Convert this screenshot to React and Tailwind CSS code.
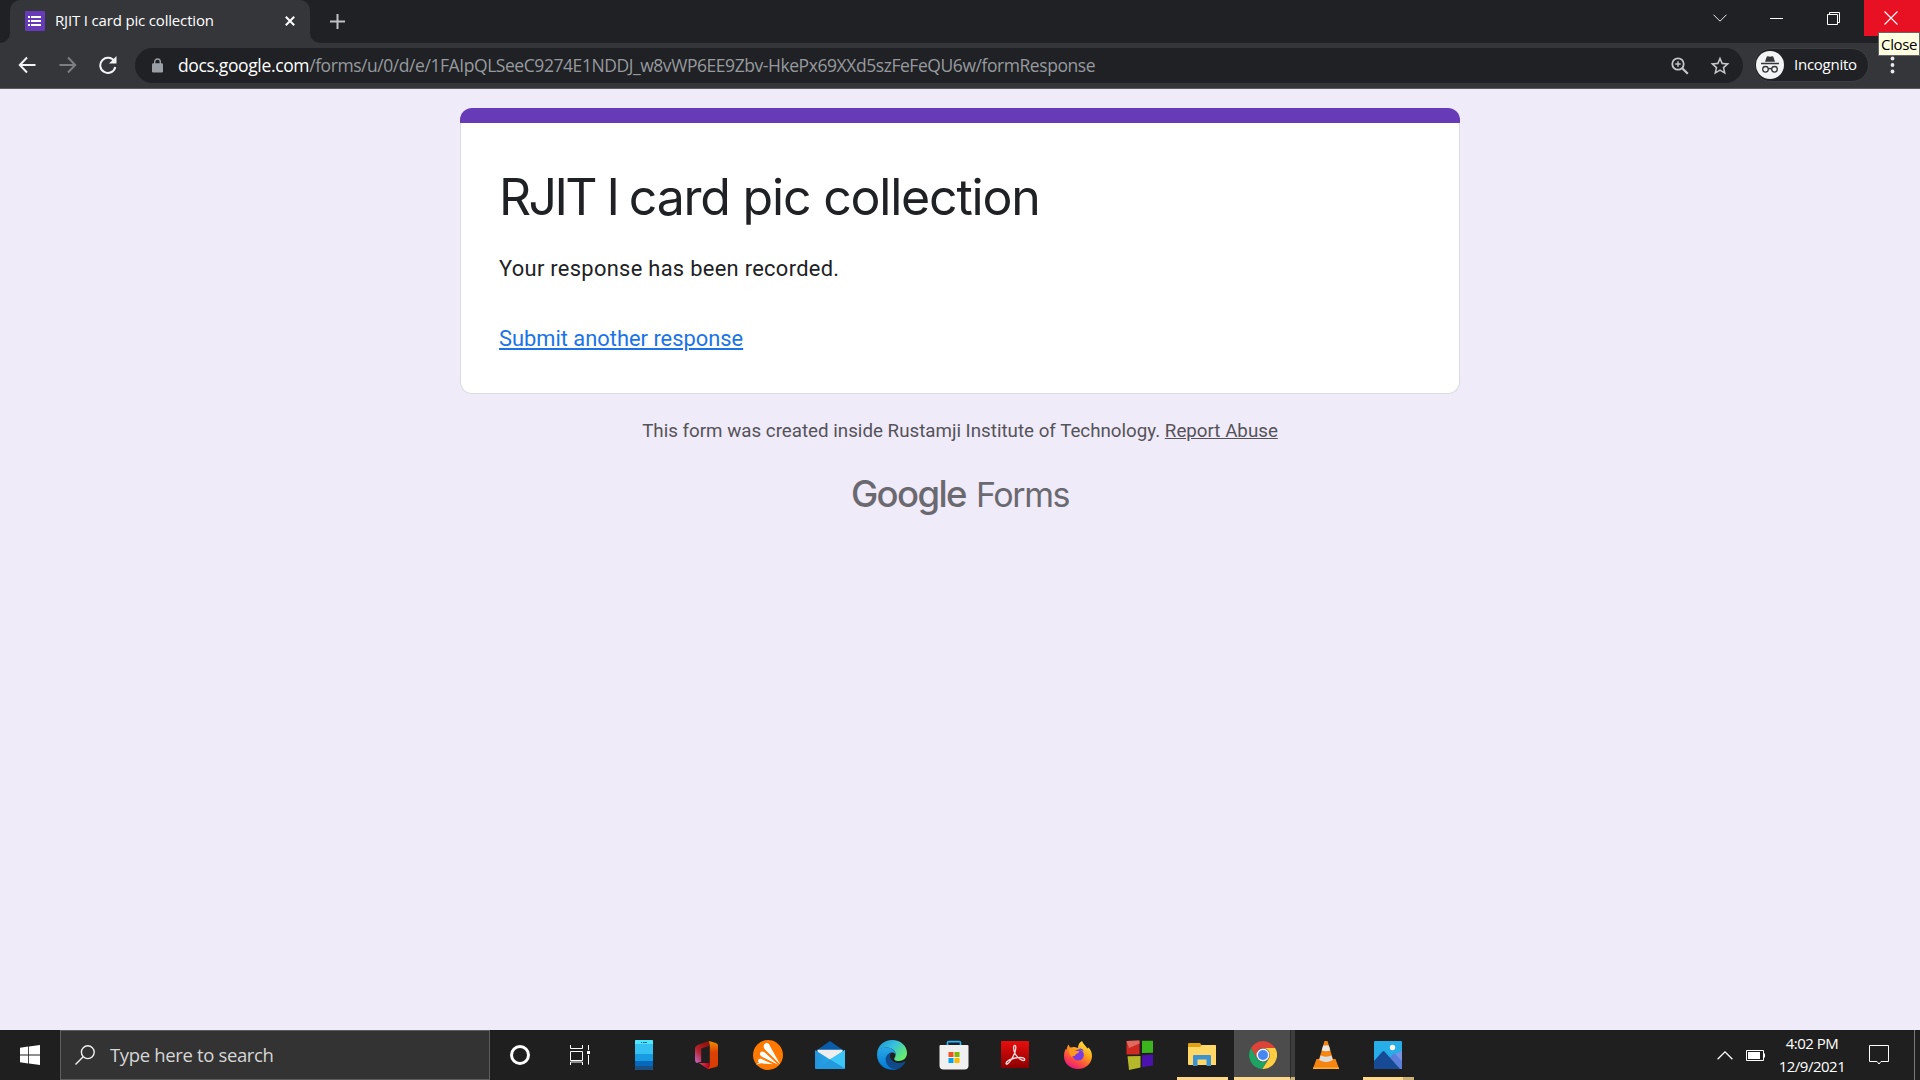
import React from "react";

const UI = "font-['Open_Sans','Noto_Sans',sans-serif]";

function TabStrip() {
  return (
    <div className="flex h-[43px] bg-[#202124]">
      <div className="flex w-[10px] items-end bg-[#35363a]"><div className="h-full w-full rounded-br-[10px] bg-[#202124]" /></div>
      <div className="flex w-[300px] items-center rounded-t-[10px] bg-[#35363a] pl-[15px]">
        <svg className="-mt-px size-5 shrink-0" viewBox="0 0 20 20">
          <rect width="20" height="20" rx="1" fill="#673ab7" />
          <path fill="#fff" d="M3 5h2v2H3zM6 5h10v2H6zM3 9h2v2H3zM6 9h10v2H6zM3 13h2v2H3zM6 13h10v2H6z" />
        </svg>
        <span className={`${UI} -mt-[2px] ml-[10px] text-[15px] tracking-[-0.17px] whitespace-nowrap text-white`}>RJIT I card pic collection</span>
        <svg className="-mt-px mr-[15px] ml-auto size-[10px]" viewBox="0 0 10 10"><path d="M.8.8l8.4 8.4M9.2.8L.8 9.2" stroke="#fff" strokeWidth="2" /></svg>
      </div>
      <div className="w-[10px] bg-[#35363a]"><div className="h-full w-full rounded-bl-[10px] bg-[#202124]" /></div>
      <svg className="mt-[14px] ml-[10px] size-[15px]" viewBox="0 0 15 15"><path d="M7.5 0v15M0 7.5h15" stroke="#bdc1c6" strokeWidth="2" /></svg>
      <div className="ml-auto flex h-9 items-center">
        <svg className="mr-[43px] h-[8px] w-[14px]" viewBox="0 0 14 8"><path d="M.5.7L7 7.200 13.500.7" fill="none" stroke="#e8eaed" strokeWidth="1" /></svg>
        <div className="mr-[44px] h-px w-[13px] bg-white" />
        <svg className="mr-6 size-[13px]" viewBox="0 0 13 13"><path d="M.5 2.500h10v10H.5zM2.500 2.500v-2h10v10h-2" fill="none" stroke="#fff" /></svg>
        <div className="flex h-9 w-14 items-center bg-[#e81123] pl-[20px]">
          <svg className="size-[14px]" viewBox="0 0 14 14"><path d="M.5.5l13 13M13.500.5l-13 13" stroke="#fff" strokeWidth="1.100" /></svg>
        </div>
      </div>
    </div>
  );
}

function Toolbar() {
  return (
    <div className="flex h-[46px] items-start border-b border-[#5c5c5f] bg-[#35363a]">
      <div className="flex h-11 w-[135px] items-center pl-[18px]">
        <svg className="size-[18px]" viewBox="0 0 18 18"><path d="M17.500 9H2.500M9 1.500L1.800 9 9 16.500" fill="none" stroke="#f1f3f4" strokeWidth="2" /></svg>
        <svg className="ml-[23px] size-[18px]" viewBox="0 0 18 18"><path d="M.5 9h15M9 1.500L16.200 9 9 16.500" fill="none" stroke="#7d7e81" strokeWidth="2" /></svg>
        <svg className="ml-[22px] size-[18px]" viewBox="0 0 18 18"><path d="M15.600 5.800A7.600 7.600 0 1 0 16.300 11" fill="none" stroke="#f1f3f4" strokeWidth="2" /><path d="M17.500 0v7.500H10z" fill="#f1f3f4" /></svg>
      </div>
      <div className="mt-[5px] flex h-[35px] w-[1608px] items-center rounded-full bg-[#202124] pl-[17px]">
        <svg className="h-[15px] w-[11px]" viewBox="0 0 11 15"><path d="M2.700 6V3.800a2.800 2.800 0 0 1 5.600 0V6" fill="none" stroke="#9aa0a6" strokeWidth="1.400" /><rect y="5.200" width="11" height="9.300" rx="1.200" fill="#9aa0a6" /></svg>
        <span className={`${UI} ml-[15px] text-[17.500px] whitespace-nowrap text-[#969a9f]`}><span className="tracking-[-0.36px] text-white">docs.google.com</span><span className="tracking-[-0.44px]">/forms/u/0/d/e/1FAIpQLSeeC9274E1NDDJ_w8vWP6EE9Zbv-HkePx69XXd5szFeFeQU6w/formResponse</span></span>
        <svg className="mr-[21px] ml-auto size-[18px]" viewBox="0 0 18 18"><g fill="none" stroke="#c4c6c9"><circle cx="7" cy="7" r="5.700" strokeWidth="1.800" /><path d="M11.200 11.200l5.600 5.600" strokeWidth="2.200" /><path d="M7 4.300v5.400M4.300 7h5.400" strokeWidth="1.400" /></g></svg>
        <svg className="mr-[13px] size-5" viewBox="1.5 1.5 21 21"><path fill="#c4c6c9" d="M22 9.240l-7.190-.62L12 2 9.190 8.630 2 9.240l5.460 4.730L5.820 21 12 17.270 18.180 21l-1.630-7.030L22 9.240zM12 15.400l-3.760 2.270 1-4.280-3.320-2.880 4.380-.38L12 6.100l1.710 4.040 4.380.38-3.320 2.880 1 4.280L12 15.400z" /></svg>
      </div>
      <div className="mt-[5px] ml-[11px] flex h-[34px] w-[115px] items-center rounded-full border border-[#3d3e42] bg-[#202124] pl-px">
        <svg className="size-7" viewBox="0 0 28 28"><circle cx="14" cy="14" r="14" fill="#f1f3f4" /><path d="M5 11.800h18v1.400H5zM9 10.800l1.700-5q.3-.8 1.200-.6l2.100.5 2.100-.5q.9-.2 1.200.6l1.700 5z" fill="#35363a" /><g fill="none" stroke="#35363a" strokeWidth="1.300"><circle cx="9.500" cy="18.300" r="2.800" /><circle cx="18.500" cy="18.300" r="2.800" /><path d="M12.300 18q1.700-1 3.400 0" /></g></svg>
        <span className={`${UI} -mt-px ml-[10px] text-[15px] tracking-[-0.25px] text-white`}>Incognito</span>
      </div>
      <div className="relative ml-auto flex h-11 w-[42px] items-center">
        <svg className="ml-[12px] h-[18px] w-[5px]" viewBox="0 0 5 18"><g fill="#e8eaed"><circle cx="2.500" cy="2.500" r="1.900" /><circle cx="2.500" cy="9" r="1.900" /><circle cx="2.500" cy="15.500" r="1.900" /></g></svg>
        <div className={`${UI} absolute -top-[11px] left-0 flex h-6 w-[42px] items-center justify-center border border-[#646464] bg-[#ffffe1] text-[15px] tracking-[-0.4px] text-black`}>Close</div>
      </div>
    </div>
  );
}

function FormPage() {
  return (
    <main className="flex flex-1 flex-col items-center bg-[#f0ebf8] pt-[19px] font-[Roboto,sans-serif]">
      <section className="h-[286px] w-[1000px]">
        <div className="h-[15px] rounded-t-[12px] bg-[#673ab7]" />
        <div className="flex h-[271px] flex-col items-start rounded-b-[12px] border border-t-0 border-[#dadce0] bg-white pl-[38px]">
          <h1 className="mt-[43px] text-[50px] leading-[62px] tracking-[-1.2px] whitespace-nowrap text-[#202124] font-['Inter',sans-serif]"><span className="tracking-[-2.6px]">RJIT I </span>card pic collection</h1>
          <p className="mt-[25px] text-[21.875px] leading-[32px] tracking-[0.31px] text-[#202124]">Your response has been recorded.</p>
          <a className="mt-[38px] text-[21.875px] leading-[32px] text-[#1a73e8] underline">Submit another response</a>
        </div>
      </section>
      <p className="mt-[24px] text-[18.750px] leading-[26px] text-[#55535a]">This form was created inside Rustamji Institute of Technology. <a className="underline">Report Abuse</a></p>
      <div className="mt-[25px] flex items-baseline text-[#6b6970] font-['Inter',sans-serif]">
        <span className="text-[36.500px] leading-[50px] font-medium tracking-[-1.6px]">Google</span>
        <span className="ml-[10px] text-[34px] leading-[50px] tracking-[-1.4px]">Forms</span>
      </div>
    </main>
  );
}

const Phone = () => (<svg className="h-[30px] w-[18px]" viewBox="0 0 18 30"><rect width="18" height="30" rx="1" fill="#35c1f1" /><path d="M0 1q0-1 1-1h16q1 0 1 1v3H0z" fill="#50e6ff" /><path d="M0 14h18v7H0z" fill="#199be2" /><path d="M0 21h18v5H0z" fill="#0669bc" /><path d="M0 26h18v3q0 1-1 1H1q-1 0-1-1z" fill="#194f82" /><path d="M6 2h1.200v1H6zM8 2h4v1H8z" fill="#0669bc" /></svg>);
const Office = () => (
  <svg className="h-7 w-[23px]" viewBox="0 0 23 28">
    <defs><linearGradient id="of1" x1="0.700" y1="0" x2="0" y2="1"><stop offset="0" stopColor="#96100b" /><stop offset=".5" stopColor="#b3222c" /><stop offset="1" stopColor="#c56ad0" /></linearGradient><linearGradient id="of2" x1="0" y1="0" x2="0" y2="1"><stop offset="0" stopColor="#f09000" /><stop offset=".4" stopColor="#dd4205" /><stop offset="1" stopColor="#d83b01" /></linearGradient><linearGradient id="of3"><stop offset="0" stopColor="#ff3c5a" /><stop offset="1" stopColor="#a0001a" /></linearGradient></defs>
    <path d="M14 0v5L6.200 7.500v13.200L1.500 22Q0 21 0 19V7.500Q0 5 2.500 4z" fill="url(#of1)" /><path d="M4 22h11v6h-2z" fill="url(#of3)" /><path d="M14 0L21 2q2 .6 2 2.500v19q0 2-2 2.500l-8 2 1.800-3V5z" fill="url(#of2)" />
  </svg>
);
const Avast = () => (<svg className="size-[30px]" viewBox="0 0 30 30"><circle cx="15" cy="15" r="15" fill="#ff7800" /><g fill="#fff"><path d="M11.800 3.800c2.500-1.800 4.500.2 5.700 3.200L27.200 24.500 12 9.500C10.200 7.500 10.200 5.200 11.800 3.800z" /><path d="M7.300 12.500c1-1.500 2.700-1.200 4.500 0L25 24.700 9.500 17C7 15.800 6.400 14 7.300 12.500z" /><path d="M5.200 20c.5-1.300 1.700-1.300 3.500-1L20 24.300 8 23.300Q5.500 23.300 3 24.800q1.500-1.800 3-2.200-1.200-1.200-.8-2.600z" /></g></svg>);
const Mail = () => (
  <svg className="h-7 w-[30px]" viewBox="0 0 30 28"><defs><linearGradient id="ml"><stop offset="0" stopColor="#2494dc" /><stop offset="1" stopColor="#27b8f2" /></linearGradient></defs>
    <path d="M0 10.500L15 0l15 10.500z" fill="#0a5ca8" /><path d="M2.500 8.800h25V18L15 22 2.500 18z" fill="#eeeeee" /><path d="M0 9l15 9.500L30 9v18q0 1-1 1H1q-1 0-1-1z" fill="url(#ml)" /><path d="M30 9v18.500L15 18.500z" fill="#3cc6f7" /><path d="M15 18.500L30 27.600q-.4.400-1 .4H2z" fill="#2399de" /></svg>
);
const Edge = () => (
  <svg className="size-[30px]" viewBox="0 0 30 30">
    <defs><linearGradient id="ed1" x1="0" y1="0" x2="1" y2=".6"><stop offset="0" stopColor="#1b8fd6" /><stop offset=".5" stopColor="#35bfe0" /><stop offset="1" stopColor="#66eb6e" /></linearGradient><linearGradient id="ed2" x1="0" y1="0" x2="0" y2="1"><stop offset="0" stopColor="#2aa7e6" /><stop offset="1" stopColor="#0078d4" /></linearGradient></defs>
    <path d="M0 14C.5 5.500 7 0 15 0c9 0 15 6 15 13 0 5-3.700 8-8.500 8-3.500 0-4.500-1.500-4.200-2.500.4-1 1.300-1.800 1.300-4.200C18.600 10 14 7.500 9 7.500 4.500 7.500 1.500 10 0 14z" fill="url(#ed1)" />
    <path d="M0 15c0-4 3.500-7.700 8.500-7.700 6 0 10 3.400 10 7.200-1-1.800-2.500-2.300-4-2-4 1-5 6.500-2.500 10.500C14 27 18 29 20.500 28.900 12 32 .5 27 0 15z" fill="url(#ed2)" />
    <path d="M14.400 12.500c-5 .8-7.500 7-4.400 12 3 4.600 9 6.300 13 3.400 2.400-1.500 4-3.300 5.200-5.400.4-.8-.3-1.100-.8-.8C23 24 17.500 23.300 14.500 20c-2-2.500-2-5.500-.1-7.500z" fill="#114a8b" />
  </svg>
);
const Store = () => (<svg className="h-[30px] w-[30px]" viewBox="0 0 30 30"><path d="M8.500 6V2.800q0-1.300 1.300-1.300h10.400q1.300 0 1.300 1.300V6" fill="none" stroke="#30b5ee" strokeWidth="1.700" /><path d="M9.500 2.500h11" stroke="#0f6cbd" strokeWidth="1" /><path d="M.5 6q0-1 1-1h27q1 0 1 1v19.500q0 4-4 4h-21q-4 0-4-4z" fill="#f0f0f0" /><path d="M9.500 12h5v5h-5z" fill="#f25022" /><path d="M15.500 12h5v5h-5z" fill="#7fba00" /><path d="M9.500 18h5v5h-5z" fill="#00a4ef" /><path d="M15.500 18h5v5h-5z" fill="#ffb900" /></svg>);
const Acrobat = () => (
  <svg className="h-7 w-7" viewBox="0 0 28 28"><defs><linearGradient id="ac" x1="0" y1="0" x2="0" y2="1"><stop offset="0" stopColor="#e80d0d" /><stop offset="1" stopColor="#8c0000" /></linearGradient></defs><rect width="28" height="27" rx=".5" fill="url(#ac)" />
    <path d="M5 22.500c0-2 4-4.600 9-5.500 5-.8 9.500-.3 9.800 1.500.1 1.500-2.300 1.300-4.600-.3-3.700-2.500-6.400-7-6.600-11.400C12.500 4.200 14.600 3.500 14.800 6c.2 3.800-2.500 9.500-4.800 13C8 22.200 5.200 24.300 5 22.500z" fill="none" stroke="#f6dede" strokeWidth="1.300" /></svg>
);
const Firefox = () => (
  <svg className="size-7" viewBox="0 0 28 28"><defs><linearGradient id="ff" x1=".85" y1="0" x2=".25" y2="1"><stop offset="0" stopColor="#fff44f" /><stop offset=".4" stopColor="#ffa416" /><stop offset=".72" stopColor="#ff4a40" /><stop offset="1" stopColor="#e31587" /></linearGradient></defs>
    <path d="M4.500 3.500L6 6.500l4.500-.5L14 7c0-3.500 1.500-5.500 4-7 1 3 3.500 4.500 5.500 7.500l1-1c2.500 2.500 3.500 5.500 3.500 8.500 0 7-6 13-14 13S0 22.500 0 15c0-3.500.8-5.500 2-7.500L2.800 9q0-3.500 1.700-5.500z" fill="url(#ff)" /><circle cx="14.300" cy="14" r="5.600" fill="#7a3ce0" /><path d="M14 8.500q4-2.500 6 2-3-2-6-2z" fill="#4a55e0" /><path d="M5 7.500q4-.5 6 2 2 .5 4.500.8-.5 1.900-3.300 2.600-1.200.6-1.200 2-2.500-.5-3.500 1.100-3-3-2.500-8.500z" fill="#ff9a1a" /></svg>
);
const Blocks = () => (<svg className="size-[30px]" viewBox="0 0 30 30"><path d="M1.500 1l13-.5v14h-13z" fill="#cf2a22" /><path d="M1.500 1l13-.5v3L4 8z" fill="#e06a60" /><path d="M17 .8h11v12l-11 .3z" fill="#3bb41d" /><path d="M2.500 16.200l13-.2v11.500l-11.500 2.500z" fill="#b5b82b" /><path d="M17 15.200l11-.8v11l-11 1.900z" fill="#4b12ad" /></svg>);
const Explorer = () => (
  <svg className="h-[30px] w-7" viewBox="0 0 28 30"><path d="M0 4q0-1 1-1h11l1.500 2H28v8H0z" fill="#e2a112" /><path d="M0 7h12l2-2h13q1 0 1 1v19H1q-1 0-1-1z" fill="#ffd868" /><path d="M5 16q0-1 1-1h16q1 0 1 1v10h-4.500v-6.500h-9V26H5z" fill="#3c93d2" /></svg>
);
const Chrome = () => (
  <svg className="size-7" viewBox="0 0 28 28"><path d="M1.900 7A14 14 0 0 1 26.100 7H14a7 7 0 0 0-6 3.500L7.900 17.500z" fill="#db4437" /><path d="M1.900 7L8 17.500A7 7 0 0 0 14 21l4-1-4.600 8A14 14 0 0 1 1.900 7z" fill="#1da362" /><path d="M26.100 7A14 14 0 0 1 13.400 28L20 17.500A7 7 0 0 0 14 7z" fill="#ffcd40" /><circle cx="14" cy="14" r="6.500" fill="#f1f1f1" /><circle cx="14" cy="14" r="5" fill="#4688f1" /></svg>
);
const Vlc = () => (<svg className="h-7 w-[26px]" viewBox="0 0 26 28"><path d="M3.500 18h19L26 27.500q0 .5-1 .5H1q-1 0-1-.5z" fill="#f58410" /><path d="M0 26.500h26V28H0z" fill="#ffae35" /><path d="M11.500 0h3l5.500 18.500q-7 4-14 0z" fill="#f58410" /><path d="M10.200 4.500h5.600l1.500 5q-4.300 1.500-8.600 0z" fill="#e8e8e8" /><path d="M7.500 14.500q5.500 2.300 11 0l1.300 4.500q-6.800 4-13.600 0z" fill="#dcdcdc" /></svg>);
const Photos = () => (<svg className="size-7" viewBox="0 0 28 28"><rect width="28" height="28" rx="1" fill="#27aee9" /><path d="M14 19l5.500-6.500q.5-.5 1 0L28 20v8H14z" fill="#5b7fd8" /><path d="M28 10v10l-6.500-7z" fill="#7d90e3" /><path d="M0 20L8.500 10.500q1-1 2 0L26 28H0z" fill="#174a94" /><circle cx="18.500" cy="6.500" r="2.700" fill="#fff" /></svg>);

const APPS = [Phone, Office, Avast, Mail, Edge, Store, Acrobat, Firefox, Blocks, Explorer, Chrome, Vlc, Photos];

function AppSlot({ Icon, index }) {
  return (
    <div className="relative flex h-[50px] w-[62px] items-center justify-center">
      {index === 9 && <div className="absolute bottom-0 left-[6px] h-[3px] w-[51px] bg-[#fdd88a]" />}
      {index === 10 && (
        <div className="absolute inset-y-0 left-[1px] flex w-[61px]">
          <div className="w-14 border-b-[3px] border-[#fdd88a] bg-[#4c4c4c]" />
          <div className="w-[5px] border-b-[3px] border-l border-b-[#cfb47c] border-l-[#2a2a2a] bg-[#3d3d3d]" />
        </div>
      )}
      {index === 12 && <div className="absolute bottom-0 left-[6px] flex h-[3px] w-[51px] bg-[#cdb078]"><div className="w-10 bg-[#fdd88a]" /></div>}
      <div className={index === 6 || index === 10 ? "relative -left-px" : "relative"}><Icon /></div>
    </div>
  );
}

function Taskbar() {
  return (
    <footer className="flex h-[50px] bg-[#1f1f1f]">
      <div className="flex w-[60px] items-center pl-5"><svg className="size-5" viewBox="0 0 20 20"><path fill="#fff" d="M0 2.800L8.200 1.600v7.900H0zM9 1.500L20 0v9.500H9zM0 10.400h8.200v8L0 17.200zM9 10.400h11V20L9 18.500z" /></svg></div>
      <div className="flex w-[430px] items-center border border-[#5e5e5e] bg-[#333333] pl-[14px]">
        <svg className="size-5" viewBox="0 0 20 20"><g fill="none" stroke="#f0f0f0" strokeWidth="1.400"><circle cx="12.800" cy="7.200" r="6.400" /><path d="M8.200 11.800L.5 19.500" /></g></svg>
        <span className={`${UI} ml-[15px] text-[18.500px] tracking-[-0.35px] whitespace-nowrap text-[#d6d6d6]`}>Type here to search</span>
      </div>
      <div className="flex w-[61px] items-center pl-5"><div className="size-5 rounded-full border-[3px] border-white" /></div>
      <div className="flex w-[62px] items-center pl-[19px]"><svg className="h-5 w-[21px]" viewBox="0 0 21 20"><g fill="none" stroke="#fff" strokeWidth="1"><path d="M.5 0v3.500h12V0M.5 6.500h12v9H.5zM.5 20v-3h12v3M18.500 0v5M18.500 10v9.500" /></g><path d="M17 6h3v3h-3z" fill="#fff" /></svg></div>
      {APPS.map((Icon, i) => <AppSlot key={i} Icon={Icon} index={i} />)}
      <div className="ml-auto flex items-center">
        <svg className="mr-[13px] h-[9px] w-[16px]" viewBox="0 0 16 9"><path d="M.6 8.300L8 .9l7.400 7.400" fill="none" stroke="#fff" strokeWidth="1.300" /></svg>
        <svg className="h-[11px] w-[19px]" viewBox="0 0 19 11"><path d="M.5.5h17v10H.5z" fill="none" stroke="#fff" /><path d="M2 2h12v7H2zM18 3.500h1v4h-1z" fill="#fff" /></svg>
        <div className={`${UI} flex w-[94px] flex-col items-center text-[15px] leading-[23px] tracking-[-0.5px] text-white`}><span>4:02 PM</span><span>12/9/2021</span></div>
        <svg className="ml-[10px] h-5 w-[20px]" viewBox="0 0 20 20"><path d="M.5.500h19v16h-7.500L10 19l-2-2.500H.5z" fill="none" stroke="#fff" /></svg>
        <div className="ml-[25px] h-[50px] w-[6px] border-l border-[#7a7a7a]" />
      </div>
    </footer>
  );
}

export default function App() {
  return (
    <div className="flex h-[1080px] w-[1920px] flex-col overflow-hidden">
      <TabStrip />
      <Toolbar />
      <FormPage />
      <Taskbar />
    </div>
  );
}
